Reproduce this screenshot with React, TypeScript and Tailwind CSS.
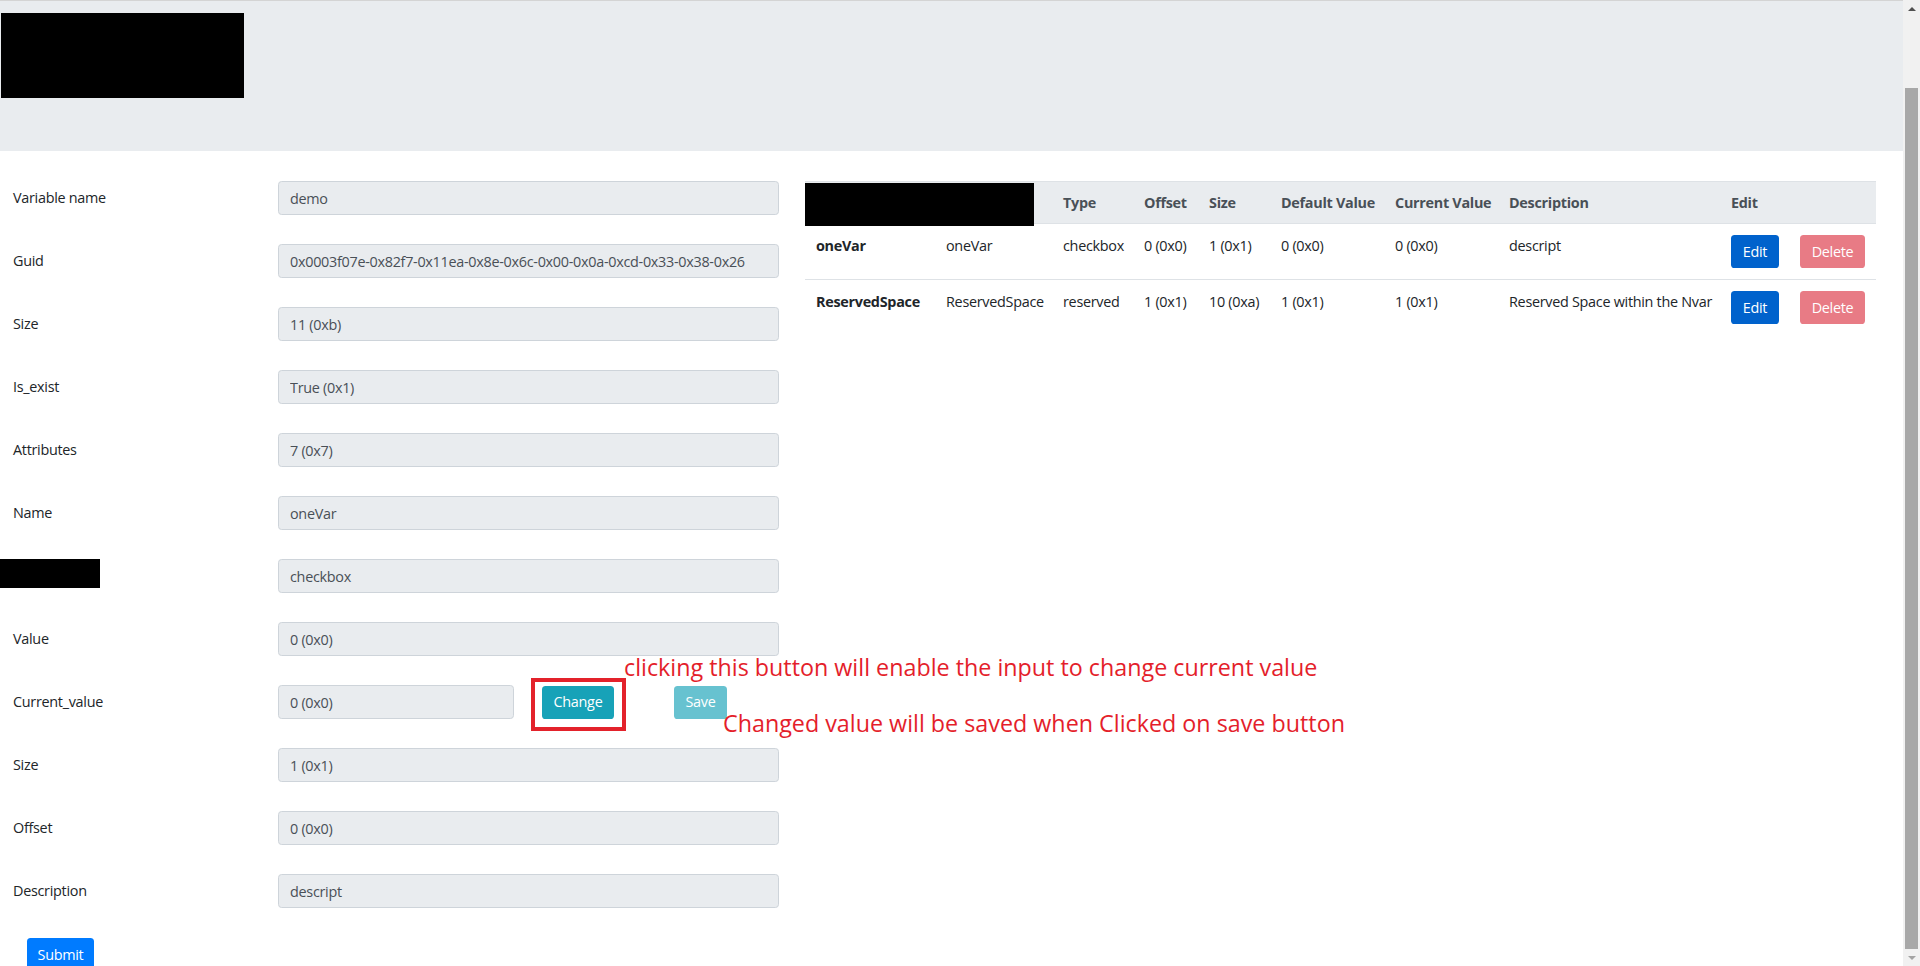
import React from 'react'

type Field = { label: string | null; value: string; kind?: 'current' }

const fields: Field[] = [
  { label: 'Variable name', value: 'demo' },
  { label: 'Guid', value: '0x0003f07e-0x82f7-0x11ea-0x8e-0x6c-0x00-0x0a-0xcd-0x33-0x38-0x26' },
  { label: 'Size', value: '11 (0xb)' },
  { label: 'Is_exist', value: 'True (0x1)' },
  { label: 'Attributes', value: '7 (0x7)' },
  { label: 'Name', value: 'oneVar' },
  { label: null, value: 'checkbox' },
  { label: 'Value', value: '0 (0x0)' },
  { label: 'Current_value', value: '0 (0x0)', kind: 'current' },
  { label: 'Size', value: '1 (0x1)' },
  { label: 'Offset', value: '0 (0x0)' },
  { label: 'Description', value: 'descript' },
]

const rows = [
  ['oneVar', 'oneVar', 'checkbox', '0 (0x0)', '1 (0x1)', '0 (0x0)', '0 (0x0)', 'descript'],
  ['ReservedSpace', 'ReservedSpace', 'reserved', '1 (0x1)', '10 (0xa)', '1 (0x1)', '1 (0x1)', 'Reserved Space within the Nvar'],
]

const colWidths = [130, 117, 81, 65, 72, 114, 114, 222, 69, 87]

function ReadonlyInput({ value, className = 'w-[501px]' }: { value: string; className?: string }) {
  return (
    <input
      readOnly
      value={value}
      className={`${className} h-[34px] rounded-[3.6px] border border-[#ced4da] bg-[#e9ecef] px-[11px] text-[14.4px] text-[#495057] outline-none`}
    />
  )
}

function FormRow({ field }: { field: Field }) {
  return (
    <div className="flex items-center h-[34px] mb-[29px]">
      {field.label ? (
        <div className="w-[265px] text-[#212529]">{field.label}</div>
      ) : (
        <div className="w-[278px] -ml-[13px] self-start">
          <div className="w-[100px] h-[29px] bg-black" />
        </div>
      )}
      {field.kind === 'current' ? (
        <div className="flex items-center">
          <ReadonlyInput value={field.value} className="w-[236px]" />
          <span className="relative ml-[28px]">
            <button className="w-[72px] h-[33px] rounded-[3.6px] bg-[#17a2b8] text-white">Change</button>
            <span className="absolute -left-[11px] -top-[8px] w-[95px] h-[53px] border-4 border-[#e3222b]" />
          </span>
          <button className="ml-[60px] w-[53px] h-[33px] rounded-[3.6px] bg-[#17a2b8] opacity-65 text-white">Save</button>
        </div>
      ) : (
        <ReadonlyInput value={field.value} />
      )}
    </div>
  )
}

export default function App() {
  return (
    <div className="flex w-full h-[966px] overflow-hidden bg-white font-['Open_Sans',sans-serif] text-[14.4px] leading-[21.6px] tracking-[-0.02em] text-[#212529]">
      <div className="relative flex-1">
        <header className="h-[151px] bg-[#e9ecef] border-t border-[#d4d4d4] pt-[12px] pl-[1px]">
          <div className="w-[243px] h-[85px] bg-black" />
        </header>

        <div className="flex pt-[30px]">
          <form className="w-[779px] pl-[13px]" onSubmit={(e) => e.preventDefault()}>
            {fields.map((f, i) => (
              <FormRow key={i} field={f} />
            ))}
            <button className="ml-[14px] mt-[1px] w-[67px] h-[34px] rounded-[3.6px] bg-[#007bff] text-white">Submit</button>
          </form>

          <div className="relative ml-[26px] w-[1071px]">
            <table className="table-fixed w-[1071px] border-collapse">
              <colgroup>
                {colWidths.map((w, i) => (
                  <col key={i} style={{ width: w }} />
                ))}
              </colgroup>
              <thead>
                <tr className="h-[42px] bg-[#e9ecef] text-[#495057] border-t border-b border-[#dee2e6]">
                  {['', '', 'Type', 'Offset', 'Size', 'Default Value', 'Current Value', 'Description', 'Edit', ''].map((h, i) => (
                    <th key={i} className="px-[11px] text-left font-bold whitespace-nowrap">
                      {h}
                    </th>
                  ))}
                </tr>
              </thead>
              <tbody>
                {rows.map((r, i) => (
                  <tr key={i} className={i > 0 ? 'border-t border-[#dee2e6]' : ''}>
                    {r.map((c, j) => (
                      <td key={j} className={`px-[11px] pt-[11px] pb-[11px] align-top whitespace-nowrap ${j === 0 ? 'font-bold' : ''}`}>
                        {c}
                      </td>
                    ))}
                    <td className="px-[11px] pt-[11px] pb-[11px] align-top">
                      <button className="w-[48px] h-[33px] rounded-[3.6px] bg-[#0062cc] text-white">Edit</button>
                    </td>
                    <td className="px-[11px] pt-[11px] pb-[11px] align-top">
                      <button className="w-[65px] h-[33px] rounded-[3.6px] bg-[#dc3545] opacity-65 text-white">Delete</button>
                    </td>
                  </tr>
                ))}
              </tbody>
            </table>
            <div className="absolute left-0 top-[2px] w-[229px] h-[43px] bg-black" />
          </div>
        </div>

        {/* annotations drawn over the screenshot */}
        <div className="absolute left-[624px] top-[656px] text-[23.3px] leading-[23.3px] tracking-normal text-[#e41e2b] whitespace-nowrap">
          clicking this button will enable the input to change current value
        </div>
        <div className="absolute left-[723px] top-[712px] text-[23.3px] leading-[23.3px] tracking-normal text-[#e41e2b] whitespace-nowrap">
          Changed value will be saved when Clicked on save button
        </div>
      </div>

      <div className="w-[17px] h-full flex flex-col bg-[#f1f1f1]">
        <div className="h-[17px] flex items-center justify-center">
          <div className="w-0 h-0 border-l-[4px] border-r-[4px] border-b-[4px] border-l-transparent border-r-transparent border-b-[#505050]" />
        </div>
        <div className="h-[71px]" />
        <div className="flex-1 mx-[2px] bg-[#a8a8a8]" />
        <div className="h-[17px] flex items-center justify-center">
          <div className="w-0 h-0 border-l-[4px] border-r-[4px] border-t-[4px] border-l-transparent border-r-transparent border-t-[#a3a3a3]" />
        </div>
      </div>
    </div>
  )
}
